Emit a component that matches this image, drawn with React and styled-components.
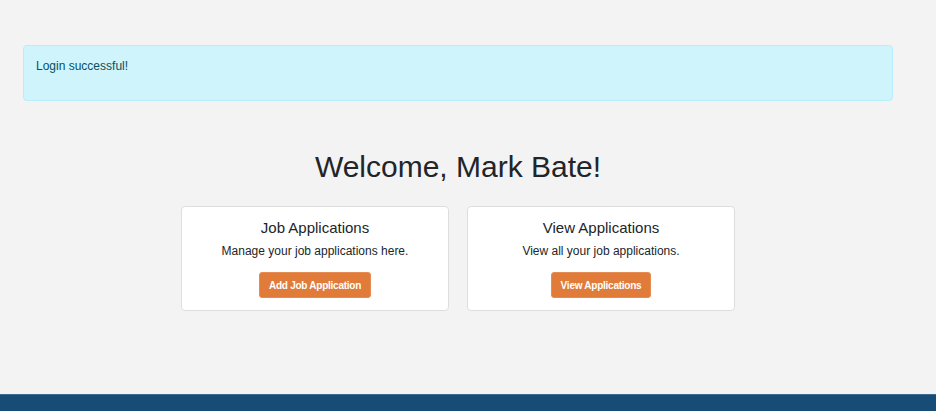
import React from "react";
import styled, { createGlobalStyle } from "styled-components";

const GlobalStyle = createGlobalStyle`
  html, body {
    margin: 0;
    padding: 0;
    background: #f3f3f3;
    font-family: "Liberation Sans", Arial, sans-serif;
    color: #212529;
  }
  * { box-sizing: border-box; }
`;

const Page = styled.div`
  display: flex;
  flex-direction: column;
  height: 100vh;
  overflow: hidden;
`;

const Main = styled.main`
  flex: 0 0 394px;
  padding-top: 45px;
`;

const Container = styled.div`
  width: 870px;
  margin-left: 23px;
`;

const Alert = styled.div`
  background: #cff4fc;
  border: 1px solid #b6effb;
  border-radius: 4px;
  color: #055160;
  font-size: 12px;
  line-height: 18px;
  padding: 11px 12px 25px;
`;

const Heading = styled.h1`
  margin: 48px 0 21px;
  font-size: 30px;
  line-height: 36px;
  font-weight: 400;
  text-align: center;
  color: #212529;
`;

const CardRow = styled.div`
  display: flex;
  justify-content: center;
  gap: 18px;
`;

const Card = styled.div`
  width: 268px;
  background: #fff;
  border: 1px solid #dedede;
  border-radius: 4px;
  padding: 12px 12px 12px;
  display: flex;
  flex-direction: column;
  align-items: center;
  text-align: center;
`;

const CardTitle = styled.h5`
  margin: 0 0 5px;
  font-size: 15px;
  line-height: 18px;
  font-weight: 400;
  color: #212529;
`;

const CardText = styled.p`
  margin: 0 0 12px;
  font-size: 12px;
  line-height: 18px;
  color: #212529;
`;

const Button = styled.button`
  height: 26px;
  padding: 0 9px;
  background: #e07b39;
  border: 1px solid #e58c52;
  border-radius: 3px;
  color: #fff;
  font-family: "Liberation Sans", Arial, sans-serif;
  font-size: 10px;
  font-weight: 700;
  letter-spacing: -0.25px;
  cursor: pointer;
`;

const Footer = styled.footer`
  flex: 1 0 auto;
  background: #174c77;
  border-top: 1px solid #3c6990;
`;

export default function App() {
  return (
    <Page>
      <GlobalStyle />
      <Main>
        <Container>
          <Alert>Login successful!</Alert>
          <Heading>Welcome, Mark Bate!</Heading>
          <CardRow>
            <Card>
              <CardTitle>Job Applications</CardTitle>
              <CardText>Manage your job applications here.</CardText>
              <Button>Add Job Application</Button>
            </Card>
            <Card>
              <CardTitle>View Applications</CardTitle>
              <CardText>View all your job applications.</CardText>
              <Button>View Applications</Button>
            </Card>
          </CardRow>
        </Container>
      </Main>
      <Footer />
    </Page>
  );
}
